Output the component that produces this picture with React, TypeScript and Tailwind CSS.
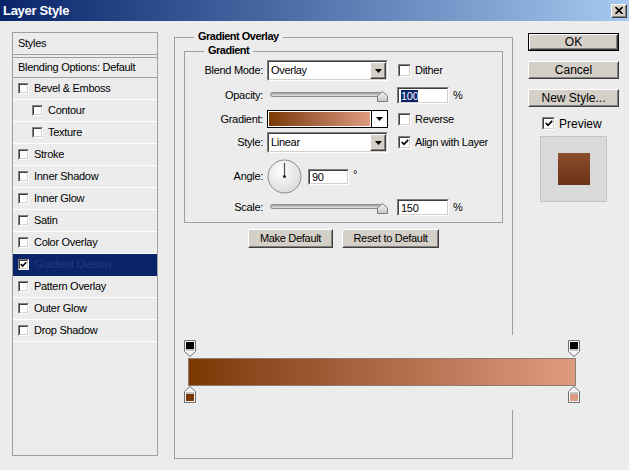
import React from "react";

// Classic Windows "Layer Style" dialog (Photoshop), Gradient Overlay page

type Kids = { className?: string; children?: React.ReactNode };

function Sunken({ className = "", children }: Kids) {
  return (
    <div className={`border border-t-[#808080] border-l-[#808080] border-r-white border-b-white ${className}`}>
      <div className="w-full h-full border border-t-[#404040] border-l-[#404040] border-r-[#d4d0c8] border-b-[#d4d0c8] bg-white flex items-center">
        {children}
      </div>
    </div>
  );
}

function Raised({ className = "", children }: Kids) {
  return (
    <div className={`border border-t-white border-l-white border-r-[#404040] border-b-[#404040] ${className}`}>
      <div className="w-full h-full border border-t-[#d4d0c8] border-l-[#d4d0c8] border-r-[#808080] border-b-[#808080] bg-[#d4d0c8] flex items-center justify-center">
        {children}
      </div>
    </div>
  );
}

function Button({ label, className = "", isDefault = false }: { label: string; className?: string; isDefault?: boolean }) {
  if (isDefault) {
    return (
      <div className={`border border-black ${className}`}>
        <Raised className="w-full h-full">{label}</Raised>
      </div>
    );
  }
  return <Raised className={className}>{label}</Raised>;
}

function CheckMark() {
  return (
    <svg width="8" height="7" viewBox="0 0 8 7">
      <path d="M0.8 3 L3 5.3 L7.2 0.9" fill="none" stroke="black" strokeWidth="1.8" />
    </svg>
  );
}

function Check({ checked = false, small = false }: { checked?: boolean; small?: boolean }) {
  return (
    <div
      className={`shrink-0 border border-t-[#808080] border-l-[#808080] border-r-white border-b-white ${
        small ? "w-[11px] h-[11px]" : "w-[13px] h-[13px]"
      }`}
    >
      <div className="w-full h-full border border-t-[#404040] border-l-[#404040] border-r-[#d4d0c8] border-b-[#d4d0c8] bg-white flex items-center justify-center">
        {checked && <CheckMark />}
      </div>
    </div>
  );
}

function DownArrow() {
  return (
    <svg width="7" height="4" viewBox="0 0 7 4">
      <path d="M0 0 H7 L3.5 4 Z" fill="black" />
    </svg>
  );
}

function Select({ value }: { value: string }) {
  return (
    <Sunken className="w-[121px] h-[21px]">
      <span className="flex-1 pl-[2px]">{value}</span>
      <Raised className="w-[16px] h-full">
        <DownArrow />
      </Raised>
    </Sunken>
  );
}

function Slider() {
  return (
    <div className="relative w-[121px] h-[17px] shrink-0">
      <div className="absolute left-[3px] top-[5px] w-[112px] h-[5px] rounded-full border border-[#8c8c8c] bg-linear-to-b from-[#a0a0a0] to-[#e4e4e4]" />
      <svg className="absolute left-[110px] top-[4px]" width="11" height="11" viewBox="0 0 11 11">
        <defs>
          <linearGradient id="thumb" x1="0" y1="0" x2="0" y2="1">
            <stop offset="0%" stopColor="#f4f4f4" />
            <stop offset="100%" stopColor="#c9c9c9" />
          </linearGradient>
        </defs>
        <path d="M5.5 0.5 L10.5 5 V10.5 H0.5 V5 Z" fill="url(#thumb)" stroke="#7a7a7a" />
      </svg>
    </div>
  );
}

function Field({ value, selected = false, className = "" }: { value: string; selected?: boolean; className?: string }) {
  return (
    <Sunken className={`shrink-0 ${className}`}>
      <span className={`ml-[2px] leading-[12px] ${selected ? "bg-[#0a246a] text-white" : ""}`}>{value}</span>
    </Sunken>
  );
}

function Legend({ text, className = "" }: { text: string; className?: string }) {
  return (
    <div className={`w-fit px-[4px] h-[13px] leading-[13px] bg-[#ececec] font-bold tracking-[-0.5px] ${className}`}>
      {text}
    </div>
  );
}

function Label({ text }: { text: string }) {
  return <div className="w-[78px] shrink-0 text-right">{text}</div>;
}

function Dial() {
  return (
    <svg width="35" height="35" viewBox="0 0 35 35" className="shrink-0">
      <defs>
        <radialGradient id="dial" cx="40%" cy="35%" r="75%">
          <stop offset="0%" stopColor="#ffffff" />
          <stop offset="100%" stopColor="#d6d6d6" />
        </radialGradient>
      </defs>
      <circle cx="17.5" cy="17.5" r="16.5" fill="url(#dial)" stroke="#8c8c8c" />
      <line x1="17.5" y1="17.5" x2="17.5" y2="4" stroke="#505050" strokeWidth="1.2" />
      <circle cx="17.5" cy="17.5" r="1.6" fill="#333" />
    </svg>
  );
}

function StopTop() {
  return (
    <svg width="12" height="17" viewBox="0 0 12 17">
      <path d="M0.5 0.5 H11.5 V11.5 L6 16.5 L0.5 11.5 Z" fill="#f6f6f6" stroke="#6e6e6e" />
      <rect x="2" y="2" width="8" height="7" fill="black" />
      <rect x="2" y="9" width="8" height="2" fill="#c4c4c4" />
    </svg>
  );
}

function StopBottom({ color }: { color: string }) {
  return (
    <svg width="12" height="17" viewBox="0 0 12 17">
      <path d="M6 0.5 L11.5 5.5 V16.5 H0.5 V5.5 Z" fill="#f6f6f6" stroke="#6e6e6e" />
      <rect x="2" y="6" width="8" height="2" fill="#c4c4c4" />
      <rect x="2" y="8" width="8" height="7" fill={color} />
    </svg>
  );
}

const styleItems = [
  { label: "Bevel & Emboss" },
  { label: "Contour", indent: true },
  { label: "Texture", indent: true },
  { label: "Stroke" },
  { label: "Inner Shadow" },
  { label: "Inner Glow" },
  { label: "Satin" },
  { label: "Color Overlay" },
  { label: "Gradient Overlay", active: true },
  { label: "Pattern Overlay" },
  { label: "Outer Glow" },
  { label: "Drop Shadow" },
];

function StylesList() {
  return (
    <div className="mt-[11px] w-[146px] h-[424px] shrink-0 border border-[#a0a0a0] flex flex-col">
      <div className="h-[22px] border-b border-[#a0a0a0] flex items-center pl-[5px]">Styles</div>
      <div className="h-[3px] border-b border-[#a0a0a0]" />
      <div className="h-[20px] border-b border-[#a0a0a0] flex items-center pl-[5px]">Blending Options: Default</div>
      {styleItems.map((item) => (
        <div
          key={item.label}
          className={`h-[22px] border-b flex items-center ${item.indent ? "pl-[19px]" : "pl-[5px]"} ${
            item.active ? "bg-[#0a246a] border-[#0a246a] text-[#24397a]" : "border-white"
          }`}
        >
          <Check small checked={item.active} />
          <span className="ml-[5px]">{item.label}</span>
        </div>
      ))}
    </div>
  );
}

function MainPanel() {
  return (
    <div className="ml-[16px] mt-[16px] w-[339px] h-[422px] shrink-0 border border-[#a0a0a0] flex flex-col">
      <Legend text="Gradient Overlay" className="-mt-[8px] ml-[19px]" />

      <div className="mt-[8px] ml-[9px] w-[319px] border border-[#a0a0a0] flex flex-col pb-[6px]">
        <Legend text="Gradient" className="-mt-[8px] ml-[19px]" />

        <div className="mt-[3px] h-[21px] flex items-center">
          <Label text="Blend Mode:" />
          <div className="ml-[4px]">
            <Select value="Overlay" />
          </div>
          <div className="ml-[10px]">
            <Check />
          </div>
          <span className="ml-[4px]">Dither</span>
        </div>

        <div className="mt-[6px] h-[17px] flex items-center">
          <Label text="Opacity:" />
          <div className="ml-[4px]">
            <Slider />
          </div>
          <Field value="100" selected className="ml-[9px] w-[52px] h-[17px]" />
          <span className="ml-[4px]">%</span>
        </div>

        <div className="mt-[6px] h-[18px] flex items-center">
          <Label text="Gradient:" />
          <div className="ml-[4px] w-[121px] h-[18px] border border-black flex">
            <div className="flex-1 border border-white bg-linear-to-r from-[#7a3900] to-[#df9b80]" />
            <div className="w-[16px] border-l border-black bg-white flex items-center justify-center">
              <DownArrow />
            </div>
          </div>
          <div className="ml-[10px]">
            <Check />
          </div>
          <span className="ml-[4px]">Reverse</span>
        </div>

        <div className="mt-[4px] h-[21px] flex items-center">
          <Label text="Style:" />
          <div className="ml-[4px]">
            <Select value="Linear" />
          </div>
          <div className="ml-[10px]">
            <Check checked />
          </div>
          <span className="ml-[4px]">Align with Layer</span>
        </div>

        <div className="mt-[6px] h-[35px] flex items-center">
          <Label text="Angle:" />
          <div className="ml-[4px] flex">
            <Dial />
          </div>
          <Field value="90" className="ml-[6px] w-[41px] h-[16px]" />
          <span className="ml-[4px] -mt-[5px]">°</span>
        </div>

        <div className="mt-[5px] h-[17px] flex items-center">
          <Label text="Scale:" />
          <div className="ml-[4px]">
            <Slider />
          </div>
          <Field value="150" className="ml-[9px] w-[52px] h-[17px]" />
          <span className="ml-[4px]">%</span>
        </div>
      </div>

      <div className="mt-[6px] flex justify-center gap-[9px]">
        <Button label="Make Default" className="w-[85px] h-[19px]" />
        <Button label="Reset to Default" className="w-[97px] h-[19px]" />
      </div>

      {/* gradient editor strip, drawn over the panel's right edge */}
      <div className="mt-[87px] w-[420px] h-[75px] shrink-0 bg-[#ececec] pt-[5px] flex flex-col">
        <div className="ml-[9px] w-[396px] h-[17px] flex justify-between">
          <StopTop />
          <StopTop />
        </div>
        <div className="ml-[13px] mt-[1px] w-[388px] h-[28px] border border-[#8c7c72] bg-linear-to-r from-[#7a3900] to-[#df9b80]" />
        <div className="ml-[9px] w-[396px] h-[17px] flex justify-between">
          <StopBottom color="#7a3900" />
          <StopBottom color="#d99a80" />
        </div>
      </div>
    </div>
  );
}

function RightColumn() {
  return (
    <div className="ml-[15px] mt-[12px] w-[91px] shrink-0 flex flex-col text-[12px] tracking-normal">
      <Button label="OK" isDefault className="h-[18px]" />
      <Button label="Cancel" className="mt-[10px] h-[18px]" />
      <Button label="New Style..." className="mt-[10px] h-[18px]" />
      <div className="mt-[10px] ml-[14px] h-[13px] flex items-center">
        <Check checked />
        <span className="ml-[4px]">Preview</span>
      </div>
      <div className="mt-[6px] ml-[12px] w-[67px] h-[66px] border border-[#c4c4c4] bg-[#d9d9d9] flex items-center justify-center">
        <div className="w-[32px] h-[32px] bg-linear-to-b from-[#8d4e2e] to-[#6a3216]" />
      </div>
    </div>
  );
}

function TitleBar() {
  return (
    <div className="h-[21px] bg-linear-to-r from-[#0a246a] to-[#a6caf0] flex items-center justify-between pl-[3px] pr-[2px]">
      <span className="text-white font-bold text-[13px] tracking-[-0.3px]">Layer Style</span>
      <Raised className="w-[16px] h-[14px]">
        <svg width="8" height="7" viewBox="0 0 8 7">
          <path d="M0.5 0 L7.5 7 M7.5 0 L0.5 7" stroke="black" strokeWidth="1.6" />
        </svg>
      </Raised>
    </div>
  );
}

export default function App() {
  return (
    <div className="w-[629px] h-[470px] bg-[#ececec] overflow-hidden font-['Liberation_Sans',Arial,sans-serif] text-[11px] text-black tracking-[-0.3px] select-none">
      <TitleBar />
      <div className="flex items-start pl-[12px]">
        <StylesList />
        <MainPanel />
        <RightColumn />
      </div>
    </div>
  );
}
